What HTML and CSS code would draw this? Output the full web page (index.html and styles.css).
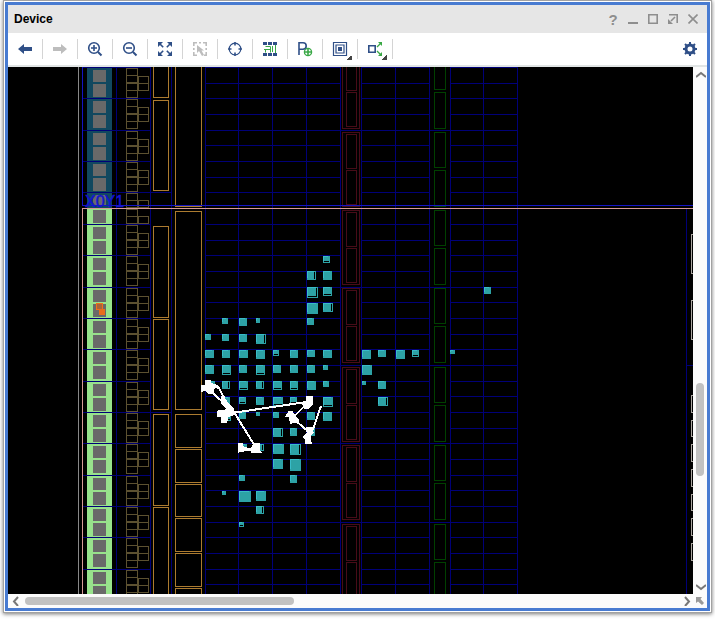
FILE: index.html
```html
<!DOCTYPE html>
<html lang="en">
<head>
<meta charset="utf-8">
<title>Device</title>
<link rel="stylesheet" href="styles.css">
</head>
<body>
<main class="window">
  <section class="frame">
    <header class="titlebar">
      <h1 class="title">Device</h1>
      <button class="win-btn" aria-label="Help">?</button>
      <button class="win-btn" aria-label="Minimize"><svg viewBox="0 0 10 10"><path class="solid" d="M0 8h10v2H0z"/></svg></button>
      <button class="win-btn" aria-label="Maximize"><svg viewBox="0 0 10 10"><path class="line" d="M.8.8h8.400v8.400H.8z"/></svg></button>
      <button class="win-btn" aria-label="Float"><svg viewBox="0 0 10 10"><path class="line" d="M1 .8h8.200V9M7 3L3 7"/><path class="solid" d="M0 5v5h5z"/></svg></button>
      <button class="win-btn" aria-label="Close"><svg viewBox="0 0 10 10"><path class="line" d="M.5.5l9 9M9.500.5l-9 9"/></svg></button>
    </header>
    <nav class="toolbar" aria-label="Device tools">
      <button class="tool" aria-label="Back"><svg viewBox="0 0 16 16"><path class="solid" d="M1 8l6-5v3h8v4H7v3z"/></svg></button>
      <button class="tool off" aria-label="Forward" disabled><svg viewBox="0 0 16 16"><path class="solid" d="M15 8L9 3v3H1v4h8v3z"/></svg></button>
      <button class="tool" aria-label="Zoom in"><svg viewBox="0 0 16 16"><circle class="line" cx="7" cy="7" r="5.300"/><path class="line" d="M4 7h6M7 4v6"/><path class="thick" d="M11 11l3.500 3.500"/></svg></button>
      <button class="tool" aria-label="Zoom out"><svg viewBox="0 0 16 16"><circle class="line" cx="7" cy="7" r="5.300"/><path class="line" d="M4 7h6"/><path class="thick" d="M11 11l3.500 3.500"/></svg></button>
      <button class="tool" aria-label="Zoom fit"><svg viewBox="0 0 16 16"><path class="solid" d="M1 1h5L1 6zM15 1h-5l5 5zM1 15h5l-5-5zM15 15h-5l5-5z"/><path class="line" d="M2 2l4.200 4.200M14 2L9.800 6.200M2 14l4.200-4.200M14 14L9.800 9.800"/></svg></button>
      <button class="tool off" aria-label="Select area" disabled><svg viewBox="0 0 16 16"><path class="line" d="M1.800 5V1.800H5M7 1.800h2M11 1.800h3.200V5M1.800 7v2M14.200 7v2M1.800 11v3.200H5M14.200 11v3.200H12"/><path class="solid" d="M5 4v8l2-2 3 5 2-1-2.500-4.500H12z"/></svg></button>
      <button class="tool" aria-label="Center selection"><svg viewBox="0 0 16 16"><circle class="thin" cx="8" cy="8" r="5.800"/><path class="line" d="M8 1v3.500M8 11.500V15M1 8h3.500M11.500 8H15"/></svg></button>
      <button class="tool" aria-label="Routing resources"><svg viewBox="0 0 16 16"><path class="solid" d="M1 1h4v3H1zM6 1h4v3H6zM11 1h4v3h-4zM1 12h4v3H1zM6 12h4v3H6zM11 12h4v3h-4z"/><path class="wire" d="M3.500 5.500h5v6M2 8.500h6M3.500 8.500v3M13.500 4v8M10.500 5v6"/></svg></button>
      <button class="tool" aria-label="Add Pblock"><svg viewBox="0 0 16 16"><path class="line" d="M2 14V1.800h4a3.200 3.200 0 010 6.400H2"/><circle class="add" cx="11" cy="11" r="3.600"/><path class="plus" d="M8 11h6M11 8v6"/></svg></button>
      <button class="tool more" aria-label="Drawing mode"><svg viewBox="0 0 16 16"><path class="thin" d="M1.500 1.500h13v13h-13zM4 4h8v8H4z"/><path class="solid" d="M6 6h4v4H6z"/></svg></button>
      <button class="tool more" aria-label="Show connectivity"><svg viewBox="0 0 16 16"><path class="line" d="M1.800 4.800h6.400v6.400H1.800z"/><path class="leaf" d="M11 1h4v4zM15 11v4h-4z"/><path class="route" d="M10 6l4-4M10 10l4 4"/></svg></button>
      <button class="tool settings" aria-label="Settings"><svg viewBox="0 0 16 16"><circle class="gear" cx="8" cy="8" r="4"/><path class="thick" d="M8 1v3M8 12v3M1 8h3M12 8h3M3 3l2 2M11 11l2 2M13 3l-2 2M3 13l2-2"/></svg></button>
    </nav>
    <div class="viewer">
      <svg class="device" id="device" role="img" aria-label="Device floorplan"></svg>
      <div class="vbar">
        <button class="arrow" aria-label="Scroll up"><svg viewBox="0 0 10 10"><path class="chev" d="M0 8l5-4 5 4"/></svg></button>
        <div class="vtrack"><div class="thumb"></div></div>
        <button class="arrow" aria-label="Scroll down"><svg viewBox="0 0 10 10"><path class="chev" d="M0 3l5 4 5-4"/></svg></button>
      </div>
      <div class="hbar">
        <button class="arrow" aria-label="Scroll left"><svg viewBox="0 0 10 10"><path class="chev" d="M8 1L4 5.500 8 10"/></svg></button>
        <div class="htrack"><div class="thumb"></div></div>
        <button class="arrow" aria-label="Scroll right"><svg viewBox="0 0 10 10"><path class="chev" d="M4 1l4 4.500L4 10"/></svg></button>
      </div>
      <button class="arrow corner" aria-label="World view"><svg viewBox="0 0 10 10"><path class="solid" d="M1 1h6L5.500 3 9 7 7 9 3 5.500 1 7z"/></svg></button>
    </div>
  </section>
</main>
<script src="device.js"></script>
</body>
</html>
```
FILE: styles.css
```css
* { box-sizing: border-box; }
body {
  margin: 0;
  height: 100vh;
  padding: 0 3px 6px;
  background: #fff;
  font-family: "Liberation Sans", Arial, sans-serif;
  overflow: hidden;
}
button { margin: 0; padding: 0; border: 0; background: none; font: inherit; color: inherit; }
svg { display: block; }
.window {
  height: 100%;
  border: 1px solid #a2a2a2;
  padding: 1px;
  background: #fff;
  box-shadow: 0 1px 4px #777;
}
.frame {
  height: 100%;
  display: flex;
  flex-direction: column;
  border: 3px solid #487bd1;
}
.titlebar {
  flex: none;
  display: flex;
  align-items: center;
  height: 28px;
  padding: 0 4px 0 6px;
  background: #e6e6e6;
}
.title { flex: 1; margin: 0; font-size: 12px; line-height: 28px; font-weight: bold; color: #000; }
.win-btn {
  display: grid;
  place-items: center;
  width: 20px;
  height: 28px;
  font-size: 15px;
  font-weight: bold;
  color: #8e8e8e;
}
.win-btn svg { width: 10px; height: 10px; }
.toolbar {
  flex: none;
  display: flex;
  align-items: center;
  height: 34px;
  border-bottom: 2px solid #e1e5e5;
  background: #fff;
  color: #2f4f87;
}
.tool {
  position: relative;
  display: grid;
  place-items: center;
  width: 35px;
  height: 20px;
  border-right: 1px solid #d4d4d4;
}
.tool svg { width: 16px; height: 16px; }
.tool.off { color: #bdbdbd; }
.tool.settings { margin-left: auto; border: 0; }
.more::after {
  content: "";
  position: absolute;
  right: 5px;
  bottom: -1px;
  width: 5px;
  height: 5px;
  background: linear-gradient(135deg, transparent 50%, #444 50%);
}
.solid { fill: currentColor; }
.line, .thick, .thin { fill: none; stroke: currentColor; stroke-width: 1.6; }
.thick { stroke-width: 2; }
.thin { stroke-width: 1.2; }
.gear { fill: none; stroke: currentColor; stroke-width: 3; }
.route, .wire { fill: none; stroke: #39a845; stroke-width: 1.3; }
.wire { stroke-width: 1; }
.leaf { fill: #39a845; }
.add { fill: #fff; stroke: #39a845; stroke-width: 1.3; }
.plus { stroke: #39a845; stroke-width: 1.6; }
.viewer {
  flex: 1;
  min-height: 0;
  display: grid;
  grid-template: minmax(0, 1fr) 14px / minmax(0, 1fr) 14px;
  background: #fbfbfb;
  color: #777;
}
.device { width: 100%; height: 100%; background: #000; shape-rendering: crispEdges; }
.vbar, .hbar { display: flex; min-width: 0; min-height: 0; }
.vbar { flex-direction: column; }
.arrow { display: grid; place-items: center; flex: none; width: 14px; height: 14px; }
.arrow svg { width: 10px; height: 10px; }
.vbar .arrow { width: 16px; }
.chev { fill: none; stroke: currentColor; stroke-width: 2; }
.corner { color: #999; }
.vtrack { flex: 1; display: grid; grid-template-rows: 302fr 93fr 104fr; padding: 0 3px; }
.vtrack .thumb { grid-row: 2; }
.htrack { flex: 1; display: grid; grid-template-columns: 3fr 269fr 385fr; padding: 3px 0; }
.htrack .thumb { grid-column: 2; }
.thumb { border-radius: 4px; background: #c1c1c1; }

/* floorplan */
.bg-grid { fill: #000078; }
.region { fill: #1414c4; }
.active { fill: #d89a98; }
.edge { fill: #888; }
.io-idle { fill: #11485f; }
.io-active { fill: #98e28c; }
.pad { fill: #696969; }
.box { fill: none; stroke-width: 1; }
.olive { stroke: #5c5130; }
.amber { stroke: #ac7b30; }
.maroon { stroke: #470c18; }
.green { stroke: #004000; }
.pale { stroke: #aaa59f; }
.cell { fill: #2da2a5; }
.shine { fill: #39bcc8; }
.slot { fill: #000; }
.placed { fill: #e86c1c; }
.placed-edge { fill: #a8653c; stroke: #f07018; }
.net { fill: none; stroke: #fff; stroke-width: 6; }
.pin { fill: #fff; }
.region-name { fill: #1414d0; stroke: #1414d0; stroke-width: 0.5; font-size: 16px; }
```
FILE: device.js
```js
const svg = document.getElementById('device');
const parts = [];
const fill = (cls, x, y, w, h) =>
  parts.push(`<rect class="${cls}" x="${x}" y="${y}" width="${w}" height="${h}"/>`);
// Outline through the pixel centres of both corners.
const box = (cls, x1, y1, x2, y2) =>
  parts.push(`<rect class="box ${cls}" x="${x1 + 0.5}" y="${y1 + 0.5}" width="${x2 - x1}" height="${y2 - y1}"/>`);

const TOP = 67, LEFT = 8, SPLIT = 208, END = 2000;
const rows = [67, 98, 130, 161, 192, 224, 255, 287, 318, 349, 381, 412, 443, 475, 506, 537, 569];
const halfRows = [83, 114, 145, 177, 240, 271, 302, 334, 365, 396, 428, 459, 490, 522, 553, 584];
const blocks = [54, 132, 210, 288, 367, 445, 524];

// I/O bank strip
fill('io-idle', 87, TOP, 25, SPLIT - TOP);
fill('io-active', 87, SPLIT, 25, 392);
for (const y of rows) {
  fill('pad', 93, y + 3, 13, y === 192 ? 11 : 12);
  fill('pad', 93, y === 192 ? y + 18 : y + 17, 13, 13);
}

// Tile grid
for (const x of [116, 150, 171, 205, 238, 272, 306, 340, 361, 395, 429, 450, 483, 517]) fill('bg-grid', x, TOP, 1, 533);
for (const y of rows) fill('bg-grid', 83, y, y === 192 || y === 412 ? 89 : 68, 1);
for (const y of [...rows, ...halfRows]) {
  fill('bg-grid', 205, y, 136, 1);
  fill('bg-grid', 361, y, 69, 1);
  fill('bg-grid', 450, y, 68, 1);
}
for (const y of [130, 287, 365, 443, 522]) fill('bg-grid', 340, y, 111, 1);
fill('bg-grid', 686, 209, 1, 391);
fill('bg-grid', 686, 365, END, 1);

// I/O logic columns
for (const y of rows) {
  if (y === 192) {
    for (const t of [193, 200, 209, 216]) box('olive', 126, t, 137, t + 7);
    for (const t of [200, 216]) box('olive', 138, t, 148, t + 7);
    continue;
  }
  for (const t of [1, 8, 16, 23]) box('olive', 126, y + t, 137, y + t + 7);
  for (const t of [9, 16]) box('olive', 138, y + t, 148, y + t + 7);
}

// Clocking columns
for (const [a, b] of [[60, 97], [100, 190], [226, 317], [319, 409], [414, 505], [507, 600]]) box('amber', 153, a, 168, b);
for (const [a, b] of [[60, 206], [211, 409], [414, 447], [449, 482], [484, 516], [518, 551], [553, 586], [588, 620]]) box('amber', 175, a, 201, b);

// Memory and arithmetic columns
for (const y of blocks) {
  box('maroon', 342, y, 359, y + 74);
  box('maroon', 346, y + 2, 356, y + 36);
  box('maroon', 346, y + 38, 356, y + 72);
  box('green', 434, y, 445, y + 35);
  box('green', 434, y + 38, 445, y + 74);
}

// Far-side columns
for (const [a, b] of [[234, 273], [300, 339], [395, 412], [420, 436], [444, 461], [469, 486], [494, 510], [518, 535], [543, 560]]) box('pale', 691, a, 703, b);

// Region borders
fill('edge', 78, TOP, 1, 533);
fill('region', 82, TOP, 1, 139);
fill('region', 82, 205, END, 1);
fill('active', 82, SPLIT, 1, 392);
fill('active', 82, SPLIT, END, 1);
parts.push('<text class="region-name" x="85" y="207">X0Y1</text>');

// Placed I/O
parts.push('<rect class="placed-edge" x="96.5" y="303.5" width="6" height="6"/>');
fill('placed', 99, 309, 6, 6);

// Placed cells: x, y, width, height, open slot side
const cells = [
  [323,256,7,7,'b'],[307,271,9,9,'r'],[323,271,9,9],[307,287,11,11,'rb'],[323,287,9,9,'b'],
  [307,303,11,11],[323,303,10,9,'r'],
  [222,318,6,6],[239,318,8,8],[256,318,4,5],[307,318,7,7],
  [205,334,6,6],[222,334,7,7],[239,334,8,8],[256,334,10,10,'r'],
  [205,350,9,8],[222,350,8,8],[239,350,9,8],[256,350,9,9],[273,350,6,6,'b'],[290,350,8,8],[307,350,8,7],[323,350,9,8],
  [205,365,9,9],[222,365,9,10,'b'],[239,365,8,8],[256,365,9,10,'b'],[273,365,8,8],[290,365,8,8],[307,365,8,8],[323,365,5,5],
  [211,381,4,4],[222,381,8,8,'r'],[239,381,9,9,'b'],[256,381,8,8,'r'],[273,381,9,9,'b'],[290,381,8,9,'b'],[307,381,9,9],[323,381,6,6],
  [222,397,8,8],[239,397,7,7,'b'],[256,397,8,8],[273,397,10,9,'b'],[290,397,7,7,'b'],[323,397,10,10,'b'],
  [222,412,9,9,'b'],[239,412,7,7],[256,412,4,4],[273,412,6,6],[307,412,8,8],[323,412,9,9],
  [273,428,10,9,'r'],[290,428,7,8],[307,428,8,8],
  [239,444,8,7],[256,444,8,7,'r'],[273,444,11,10],[290,444,11,11,'r'],
  [273,459,10,10],[290,459,11,12],[239,475,6,6],[290,475,7,8],
  [222,491,4,4],[239,491,12,11],[256,491,10,10],[256,506,8,8,'r'],[239,522,5,5,'b'],
  [362,350,9,9],[378,350,8,7],[396,350,9,9],[412,350,7,7,'b'],[450,350,5,4],
  [362,365,10,10],[362,381,4,4],[378,381,8,8],[378,397,10,9,'r'],[484,287,7,7]
];
for (const [x, y, w, h, open = ''] of cells) {
  fill('cell', x, y, w, h);
  fill('shine', x, y, w - 2, 1);
  fill('shine', x, y, 1, h - 2);
  if (open.includes('b')) fill('slot', x + 1, y + h - 2, w - 2, 1);
  if (open.includes('r')) fill('slot', x + w - 2, y + 1, 1, h - 2);
}

// Selected nets and their pins, in thirds of a pixel
parts.push(`<g transform="translate(195 380) scale(.33333)">
  <path class="net" d="M60 20L72 24L90 60L115 95M50 36L112 92M112 88L178 195M110 99L335 66M378 78L354 148M288 118L335 72M290 112L342 156"/>
  <path class="pin" d="M30 0h18v9l18 6 10 9H60l-5 12-7 6-12-2-4-8-14 4V15h12z"/>
  <path class="pin" d="M78 48h12v12l28 28 2 16-20 8-4 16H78v-18H66V92l19-2 10-4-17-16z"/>
  <path class="pin" d="M129 190h14l3 10 22 5 7-15h19v22l6 6-30 2-5-8-20 3-16 3z"/>
  <path class="pin" d="M333 48h21v27l-14 13-12-2-8-14v-6h13z"/>
  <path class="pin" d="M280 94h14l4 12 14 12v8l-27 6-3-20-12-2z"/>
  <path class="pin" d="M333 140l21 2 2 18-8 6 2 26h-20v-14l-8-8 13-10z"/>
</g>`);

svg.innerHTML = `<g transform="translate(${-LEFT} ${-TOP})">${parts.join('')}</g>`;
```
